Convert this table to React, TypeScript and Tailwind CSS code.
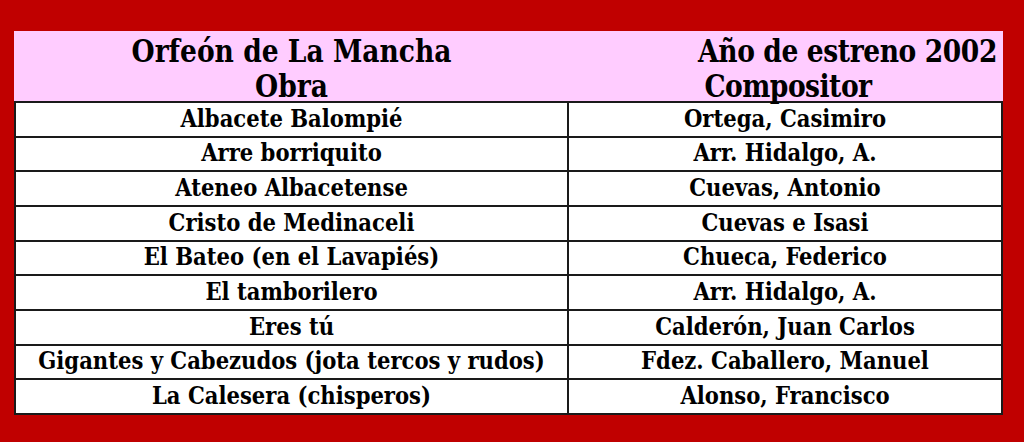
import React from "react";

const rows: [string, string][] = [
  ["Albacete Balompié", "Ortega, Casimiro"],
  ["Arre borriquito", "Arr. Hidalgo, A."],
  ["Ateneo Albacetense", "Cuevas, Antonio"],
  ["Cristo de Medinaceli", "Cuevas e Isasi"],
  ["El Bateo (en el Lavapiés)", "Chueca, Federico"],
  ["El tamborilero", "Arr. Hidalgo, A."],
  ["Eres tú", "Calderón, Juan Carlos"],
  ["Gigantes y Cabezudos (jota tercos y rudos)", "Fdez. Caballero, Manuel"],
  ["La Calesera (chisperos)", "Alonso, Francisco"],
];

export default function App() {
  return (
    <div
      className="w-[1024px] h-[442px] bg-[#c00000] pl-[14px] pt-[31px] pr-[21px] text-black"
      style={{ fontFamily: '"DejaVu Serif", serif' }}
    >
      <div className="w-[989px]">
        <div className="bg-[#ffccff] h-[70px] grid grid-cols-[555px_1fr] font-bold [font-stretch:condensed] text-[29.5px] leading-[35px] pt-[2px]">
          <div className="text-center"><span className="inline-block scale-y-[1.1]">Orfeón de La Mancha</span></div>
          <div className="text-right pr-[6px]"><span className="inline-block scale-y-[1.1] tracking-[-0.4px]">Año de estreno 2002</span></div>
          <div className="text-center"><span className="inline-block scale-y-[1.1]">Obra</span></div>
          <div className="text-center pl-[4px]"><span className="inline-block scale-y-[1.1] tracking-[-0.5px]">Compositor</span></div>
        </div>
        <div className="bg-white border-l-2 border-r-2 border-[#1a1a1a] font-bold [font-stretch:condensed] text-[23.5px]">
          {rows.map(([a, b], i) => (
            <div
              key={i}
              className="grid grid-cols-[553px_1fr] h-[34.67px] border-t-2 border-[#1a1a1a] last:border-b-2 last:h-[36.67px] items-center leading-none"
            >
              <div className="text-center border-r-2 border-[#1a1a1a] h-full flex items-center justify-center">{a}</div>
              <div className="text-center">{b}</div>
            </div>
          ))}
        </div>
      </div>
    </div>
  );
}
